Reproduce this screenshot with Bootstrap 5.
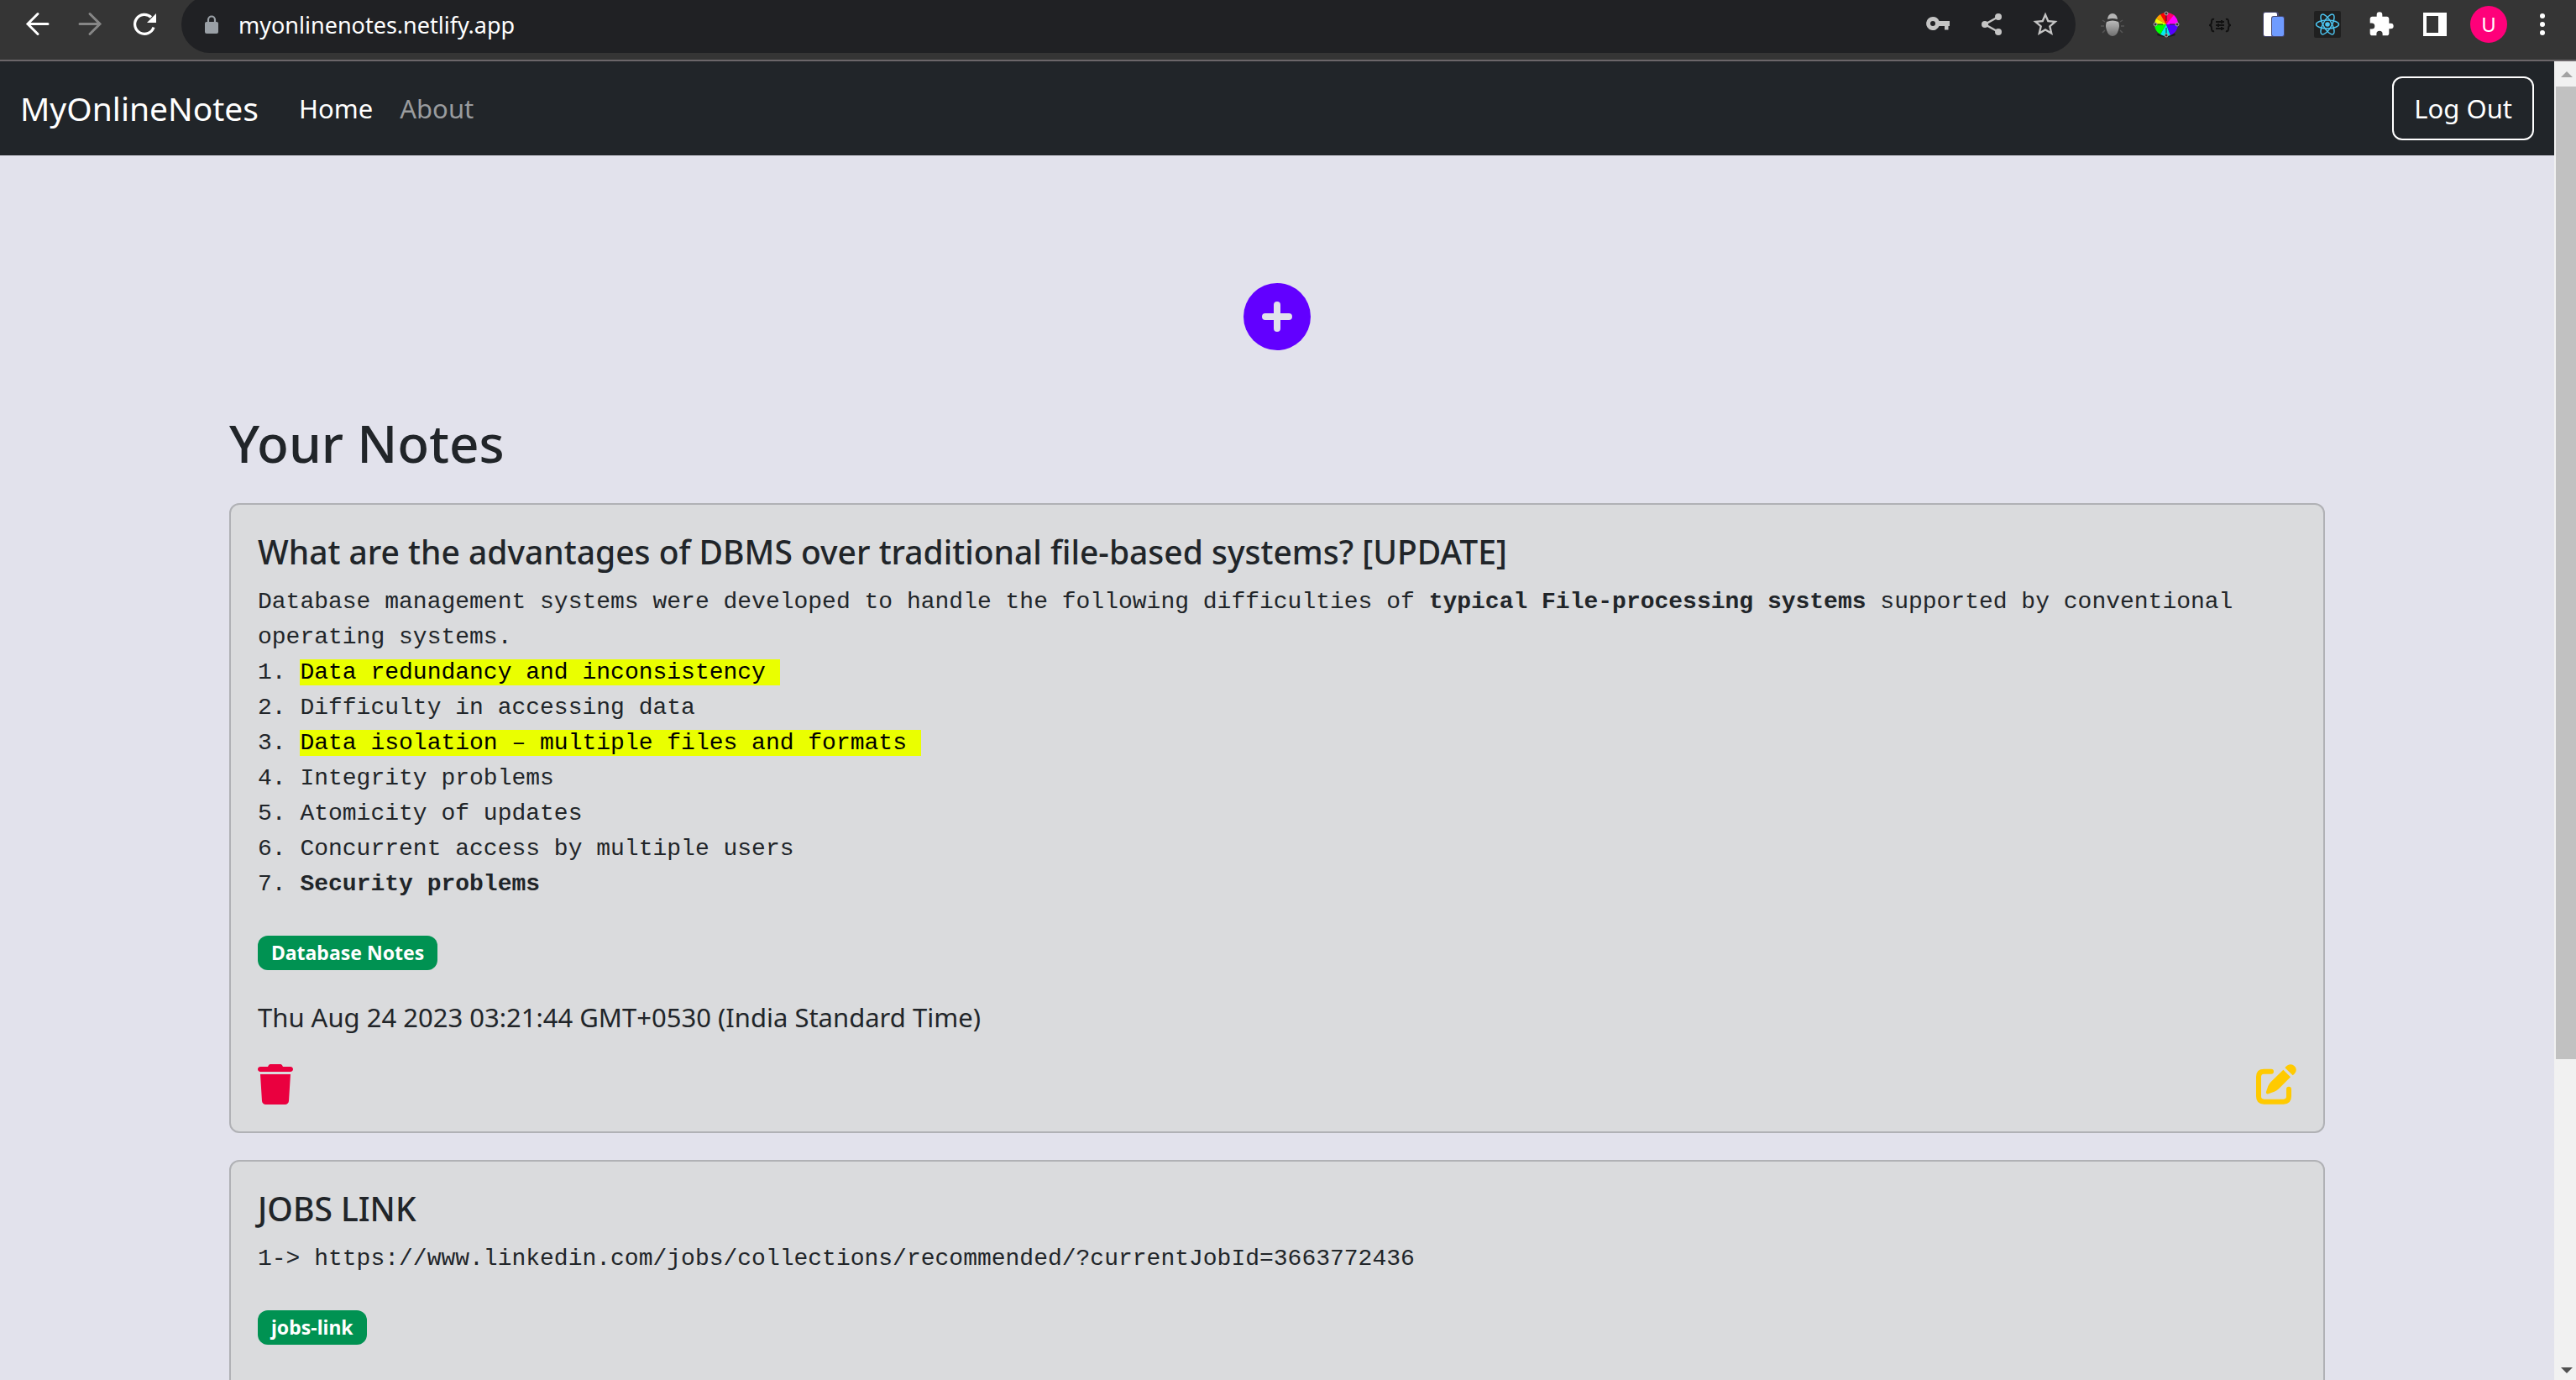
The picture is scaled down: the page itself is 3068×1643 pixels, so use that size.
<!DOCTYPE html>
<html lang="en">
<head>
<meta charset="utf-8">
<meta name="viewport" content="width=device-width, initial-scale=1">
<title>MyOnlineNotes</title>
<link href="https://cdn.jsdelivr.net/npm/bootstrap@5.3.0/dist/css/bootstrap.min.css" rel="stylesheet">
<style>
  body { height: 100vh; font-family: "Noto Sans", "Open Sans", sans-serif; font-size: 32px; line-height: 48px; color: #212529; background: #e2e2ec; }
  .browser-bar { height: 73px; background: #353535; border-bottom: 2px solid #6b6669; padding: 0 8px 0 12px; }
  .tool { width: 64px; height: 58px; padding: 0; border: 0; background: none; display: flex; align-items: center; justify-content: center; flex: none; }
  .tool svg { width: 32px; height: 32px; }
  .address { height: 68px; margin: -5px 12px 0; padding-right: 4px; border-radius: 34px; background: #202124; }
  .address input { background: none; border: 0; color: #fff; font-size: 27px; outline: 0; padding: 0; height: 58px; }
  .lock { width: 68px; height: 58px; padding-left: 20px; }
  .profile { width: 44px; height: 44px; background: #ff007a; color: #fff; font-size: 24px; line-height: 44px; }
  .site-nav { height: 112px; background: #212529; padding: 0 24px; }
  .site-nav .navbar-brand { font-size: 39px; line-height: 60px; color: #fff; padding: 0; margin-right: 32px; }
  .site-nav .navbar-nav .nav-link { font-size: 31px; padding: 16px; color: #9a9c9e; }
  .site-nav .navbar-nav .nav-link.active { color: #fff; }
  .logout { font-size: 31px; line-height: 48px; padding: 12px 24px; border: 2px solid #fff; border-radius: 12px; color: #fff; }
  .notes-wrap { max-width: 2640px; padding: 0 72px; }
  .add-note { margin: 152px 0 72px; }
  .add-note svg { width: 80px; height: 80px; }
  .plain { border: 0; background: none; padding: 0; display: block; line-height: 0; }
  h1 { font-size: 62px; line-height: 77px; margin: 0 0 33px; font-weight: 500; }
  .note { background: #dadbdd; border: 2px solid #b0b1b5; border-radius: 12px; margin-bottom: 32px; }
  .note .card-body { padding: 32px; }
  .note h2 { font-size: 39px; line-height: 48px; font-weight: 500; margin: 0 0 15px; }
  .note-text { font-family: "Liberation Mono", monospace; font-size: 28px; line-height: 42px; white-space: pre-wrap; margin: 0 0 40px; overflow: visible; }
  .hl { background: #eaff00; color: #000; }
  .tag { display: block; width: fit-content; font-size: 23px; line-height: 25px; padding: 8px 16px; border-radius: 12px; background: #009252; margin-bottom: 32px; }
  .date { margin: 0 0 32px; font-size: 31px; }
  .trash { width: 42px; height: 48px; }
  .edit { width: 48px; height: 48px; }
  .scroll-rail { width: 26px; background: #f1f1f1; padding: 12px 0 8px 2px; }
  .scroll-rail svg { width: 14px; height: 7px; margin-left: 6px; }
  .scroll-thumb { background: #c1c1c1; height: 74.7%; margin-top: 11px; }
</style>
<script src="https://cdn.jsdelivr.net/npm/bootstrap@5.3.0/dist/js/bootstrap.bundle.min.js"></script>
</head>
<body class="d-flex flex-column overflow-hidden">
<header class="browser-bar d-flex align-items-start flex-shrink-0">
  <button class="tool" aria-label="Back"><svg viewBox="0 0 32 32" fill="none" stroke="#fff" stroke-width="3"><path d="M29 15.500H5M17 3.500L5 15.500L17 27.500" stroke-linecap="round"/></svg></button>
  <button class="tool" aria-label="Forward"><svg viewBox="0 0 32 32" fill="none" stroke="#868686" stroke-width="3"><path d="M3 15.500H27M15 3.500L27 15.500L15 27.500" stroke-linecap="round"/></svg></button>
  <button class="tool" aria-label="Reload"><svg viewBox="0 0 32 32"><path d="M27 19.500A11.500 11.500 0 1 1 24 7.500" fill="none" stroke="#fff" stroke-width="3.200"/><path d="M30 3V14H19Z" fill="#fff"/></svg></button>
  <div class="address d-flex align-items-center flex-grow-1">
    <span class="lock d-flex align-items-center"><svg width="32" height="32" viewBox="0 0 32 32"><rect x="8" y="13" width="16" height="14" rx="2" fill="#9aa0a6"/><path d="M12 14V10.500a4 4 0 0 1 8 0V14" fill="none" stroke="#9aa0a6" stroke-width="2.200"/></svg></span>
    <input class="flex-grow-1" type="text" aria-label="Address" value="myonlinenotes.netlify.app">
    <button class="tool" aria-label="Passwords"><svg viewBox="0 0 32 32" fill="#c4c4c4"><path fill-rule="evenodd" d="M10 7A8 8 0 1 0 17.500 18H24V22.500H28.500V18H30V12H17.500A8 8 0 0 0 10 7ZM10 12A3 3 0 1 1 10 18A3 3 0 0 1 10 12Z"/></svg></button>
    <button class="tool" aria-label="Share"><svg viewBox="0 0 32 32" fill="#c4c4c4"><path d="M24 7L8 16L24 25" fill="none" stroke="#c4c4c4" stroke-width="2.500"/><circle cx="24" cy="7" r="4"/><circle cx="8" cy="16" r="4"/><circle cx="24" cy="25" r="4"/></svg></button>
    <button class="tool" aria-label="Bookmark"><svg viewBox="1 1 22 22" fill="#c4c4c4"><path d="M22 9.240l-7.190-.620L12 2 9.190 8.630 2 9.240l5.460 4.730L5.820 21 12 17.270 18.180 21l-1.630-7.030L22 9.240zM12 15.400l-3.760 2.270 1-4.280-3.320-2.880 4.380-.380L12 6.100l1.710 4.040 4.380.380-3.320 2.880 1 4.280L12 15.400z"/></svg></button>
  </div>
  <button class="tool" aria-label="Bug extension"><svg viewBox="0 0 32 32"><defs><linearGradient id="shell" x2="0" y2="1"><stop stop-color="#bbb"/><stop offset="1" stop-color="#707070"/></linearGradient></defs><path d="M7 13l-3-2M6 18H2M7 23l-3 3M25 13l3-2M26 18h4M25 23l3 3" stroke="#555" stroke-width="1.500"/><path d="M10 10a6 7 0 0 1 12 0q-6-2-12 0Z" fill="#b5b5b5"/><path d="M9 13q7-3 14 0q2 4 0 10q-2 7-7 7t-7-7q-2-6 0-10Z" fill="url(#shell)"/></svg></button>
  <button class="tool" aria-label="Color wheel"><svg viewBox="0 0 32 32"><ellipse cx="16" cy="28" rx="11" ry="3" fill="#1c1c1c"/><path d="M16 16V2A14 14 0 0 1 26 6Z" fill="#f06"/><path d="M16 16V2A14 14 0 0 0 9 4Z" fill="#f00"/><path d="M16 16L9 4A14 14 0 0 0 4 9Z" fill="#ff9d00"/><path d="M16 16L4 9A14 14 0 0 0 2 16Z" fill="#eaff00"/><path d="M16 16H2A14 14 0 0 0 9 28Z" fill="#0f0"/><path d="M16 16L9 28A14 14 0 0 0 21 29Z" fill="#0ee"/><path d="M16 16L21 29A14 14 0 0 0 30 16Z" fill="#50f"/><path d="M16 16H30A14 14 0 0 0 25 5Z" fill="#f0f"/><path d="M16 3V12M16 20V29M3 16H12M20 16H29" stroke="#222" stroke-width="1"/><g fill="#333" stroke="#aaa"><circle cx="16" cy="3" r="2"/><circle cx="16" cy="29" r="2"/><circle cx="3" cy="16" r="2"/><circle cx="29" cy="16" r="2"/></g></svg></button>
  <button class="tool" aria-label="JSON tools"><svg viewBox="0 0 32 32" fill="none" stroke="#111" stroke-width="2"><path d="M9 10Q6 9 6 13T3 17Q6 17 6 21T9 24M23 10Q26 9 26 13T29 17Q26 17 26 21T23 24M11 13H21M11 17H21M11 21H21M18 11v4M14 15v4M18 19v4"/></svg></button>
  <button class="tool" aria-label="Device preview"><svg viewBox="0 0 32 32"><rect x="3" y="1" width="19" height="30" rx="3" fill="#45466e"/><rect x="4" y="2" width="16" height="28" rx="2" fill="#fff"/><rect x="13" y="6" width="16" height="25" rx="3" fill="#45466e"/><rect x="14" y="7" width="14" height="23" rx="2" fill="#6f9bff"/></svg></button>
  <button class="tool" aria-label="React tools"><svg viewBox="0 0 32 32"><rect width="32" height="32" rx="2" fill="#202020"/><g fill="none" stroke="#4cc4f0" stroke-width="1.500"><ellipse cx="16" cy="16" rx="13.500" ry="5"/><ellipse cx="16" cy="16" rx="13.500" ry="5" transform="rotate(60 16 16)"/><ellipse cx="16" cy="16" rx="13.500" ry="5" transform="rotate(120 16 16)"/></g><circle cx="16" cy="16" r="2.800" fill="#4cc4f0"/></svg></button>
  <button class="tool" aria-label="Extensions"><svg viewBox="0 0 24 24" fill="#fff"><path d="M20.500 11H19V7c0-1.100-.9-2-2-2h-4V3.500a2.500 2.500 0 0 0-5 0V5H4c-1.100 0-1.990.9-1.990 2v3.800H3.500a2.700 2.700 0 0 1 0 5.400H2V20c0 1.100.9 2 2 2h3.800v-1.500a2.700 2.700 0 0 1 5.400 0V22H17c1.100 0 2-.9 2-2v-4h1.500a2.500 2.500 0 0 0 0-5z"/></svg></button>
  <button class="tool" aria-label="Side panel"><svg viewBox="0 0 32 32"><path fill="#fff" fill-rule="evenodd" d="M2 2H30V30H2ZM6 6V26H20V6Z"/></svg></button>
  <button class="tool" aria-label="Profile"><span class="profile rounded-circle">U</span></button>
  <button class="tool" aria-label="Menu"><svg viewBox="0 0 32 32" fill="#fff"><circle cx="16" cy="6" r="3"/><circle cx="16" cy="16" r="3"/><circle cx="16" cy="26" r="3"/></svg></button>
</header>
<div class="d-flex flex-grow-1 overflow-hidden">
  <div class="flex-grow-1 overflow-hidden">
    <nav class="site-nav navbar navbar-expand d-flex">
      <a class="navbar-brand" href="#">MyOnlineNotes</a>
      <div class="navbar-nav me-auto">
        <a class="nav-link active" href="#" aria-current="page">Home</a>
        <a class="nav-link" href="#">About</a>
      </div>
      <button class="btn logout">Log Out</button>
    </nav>
    <main class="container-fluid notes-wrap">
      <div class="add-note d-flex justify-content-center">
        <button class="plain" aria-label="Add note"><svg viewBox="0 0 80 80"><circle cx="40" cy="40" r="40" fill="#6200ff"/><path d="M40 26V54M26 40H54" stroke="#e2e2ec" stroke-width="8" stroke-linecap="round"/></svg></button>
      </div>
      <h1>Your Notes</h1>
      <article class="card note">
        <div class="card-body">
          <h2>What are the advantages of DBMS over traditional file-based systems? [UPDATE]</h2>
          <pre class="note-text">Database management systems were developed to handle the following difficulties of <b>typical File-processing systems</b> supported by conventional operating systems.
1. <span class="hl">Data redundancy and inconsistency </span>
2. Difficulty in accessing data
3. <span class="hl">Data isolation – multiple files and formats </span>
4. Integrity problems
5. Atomicity of updates
6. Concurrent access by multiple users
7. <b>Security problems</b></pre>
          <span class="badge tag">Database Notes</span>
          <p class="date">Thu Aug 24 2023 03:21:44 GMT+0530 (India Standard Time)</p>
          <div class="d-flex justify-content-between">
            <button class="plain" aria-label="Delete note"><svg class="trash" viewBox="0 0 448 512" fill="#ea003f"><path d="M135.200 17.700L128 32H32C14.300 32 0 46.300 0 64S14.300 96 32 96H416c17.700 0 32-14.300 32-32s-14.300-32-32-32H320l-7.200-14.300C307.400 6.800 296.300 0 284.200 0H163.800c-12.100 0-23.200 6.800-28.600 17.700zM416 128H32L53.200 467c1.600 25.300 22.600 45 47.900 45H346.900c25.300 0 46.300-19.700 47.900-45L416 128z"/></svg></button>
            <button class="plain" aria-label="Edit note"><svg class="edit" viewBox="0 0 144 144" fill="#ffca00"><path d="M54 26H28Q9 26 9 45V115Q9 134 28 134H98Q117 134 117 115V89" fill="none" stroke="#ffca00" stroke-width="18" stroke-linecap="round"/><path d="M97 20L123 46L81 88Q74 95 65 98L44 106Q34 108 36 98L43 78Q46 70 53 63ZM103 13C113-1 128-3 137 7C147 17 145 29 131 40Z"/></svg></button>
          </div>
        </div>
      </article>
      <article class="card note">
        <div class="card-body">
          <h2>JOBS LINK</h2>
          <pre class="note-text">1-&gt; https://www.linkedin.com/jobs/collections/recommended/?currentJobId=3663772436</pre>
          <span class="badge tag">jobs-link</span>
        </div>
      </article>
    </main>
  </div>
  <div class="scroll-rail d-flex flex-column flex-shrink-0">
    <svg viewBox="0 0 14 7" fill="#a3a3a3"><path d="M0 7L7 0L14 7Z"/></svg>
    <div class="scroll-thumb"></div>
    <svg class="mt-auto" viewBox="0 0 14 7" fill="#505050"><path d="M0 0L7 7L14 0Z"/></svg>
  </div>
</div>
</body>
</html>
